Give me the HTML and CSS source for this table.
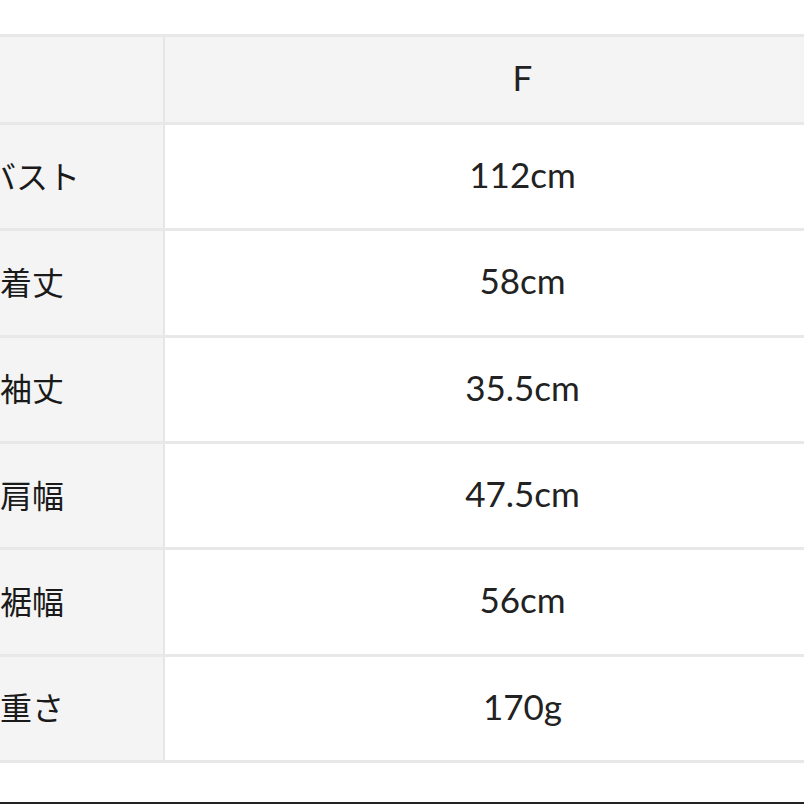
FILE: index.html
```html
<!DOCTYPE html>
<html lang="ja">
<head>
<meta charset="utf-8">
<title>サイズ表</title>
<link rel="stylesheet" href="styles.css">
</head>
<body>
<div class="page">
  <div class="table">
    <div class="row head">
      <div class="label"></div>
      <div class="value">F</div>
    </div>
    <div class="row">
      <div class="label">バスト</div>
      <div class="value">112cm</div>
    </div>
    <div class="row">
      <div class="label">着丈</div>
      <div class="value">58cm</div>
    </div>
    <div class="row">
      <div class="label">袖丈</div>
      <div class="value">35.5cm</div>
    </div>
    <div class="row">
      <div class="label">肩幅</div>
      <div class="value">47.5cm</div>
    </div>
    <div class="row">
      <div class="label">裾幅</div>
      <div class="value">56cm</div>
    </div>
    <div class="row">
      <div class="label">重さ</div>
      <div class="value">170g</div>
    </div>
  </div>
  <div class="bottom-line"></div>
</div>
</body>
</html>
```

FILE: styles.css
```css
html, body {
  margin: 0;
  padding: 0;
  background: #ffffff;
  overflow: hidden;
}

.page {
  width: 804px;
  height: 804px;
  padding-top: 34px;
  box-sizing: border-box;
  display: flex;
  flex-direction: column;
  overflow: hidden;
}

.table {
  margin-left: -99px;
  width: 979px;
  border-top: 3px solid #e8e8e8;
  display: flex;
  flex-direction: column;
  color: #1a1a1a;
}

.row {
  display: flex;
  height: 103.33px;
  border-bottom: 3px solid #e8e8e8;
}

.row.head {
  height: 85px;
}

.label {
  width: 264px;
  flex: none;
  background: #f4f4f4;
  border-right: 2px solid #e6e6e6;
  display: flex;
  align-items: center;
  justify-content: center;
  padding-bottom: 4px;
  box-sizing: border-box;
  font-family: "Noto Sans CJK JP", "Noto Sans", sans-serif;
  font-size: 32px;
  font-weight: 400;
  line-height: 1;
}

.value {
  flex: 1;
  display: flex;
  align-items: center;
  justify-content: center;
  padding-bottom: 4px;
  box-sizing: border-box;
  font-family: Lato, "Noto Sans", sans-serif;
  font-size: 35px;
  font-weight: 400;
  line-height: 1;
  color: #222222;
  background: #ffffff;
}

.head .value {
  background: #f4f4f4;
}

.bottom-line {
  margin-top: auto;
  height: 2px;
  background: #222222;
}
```
